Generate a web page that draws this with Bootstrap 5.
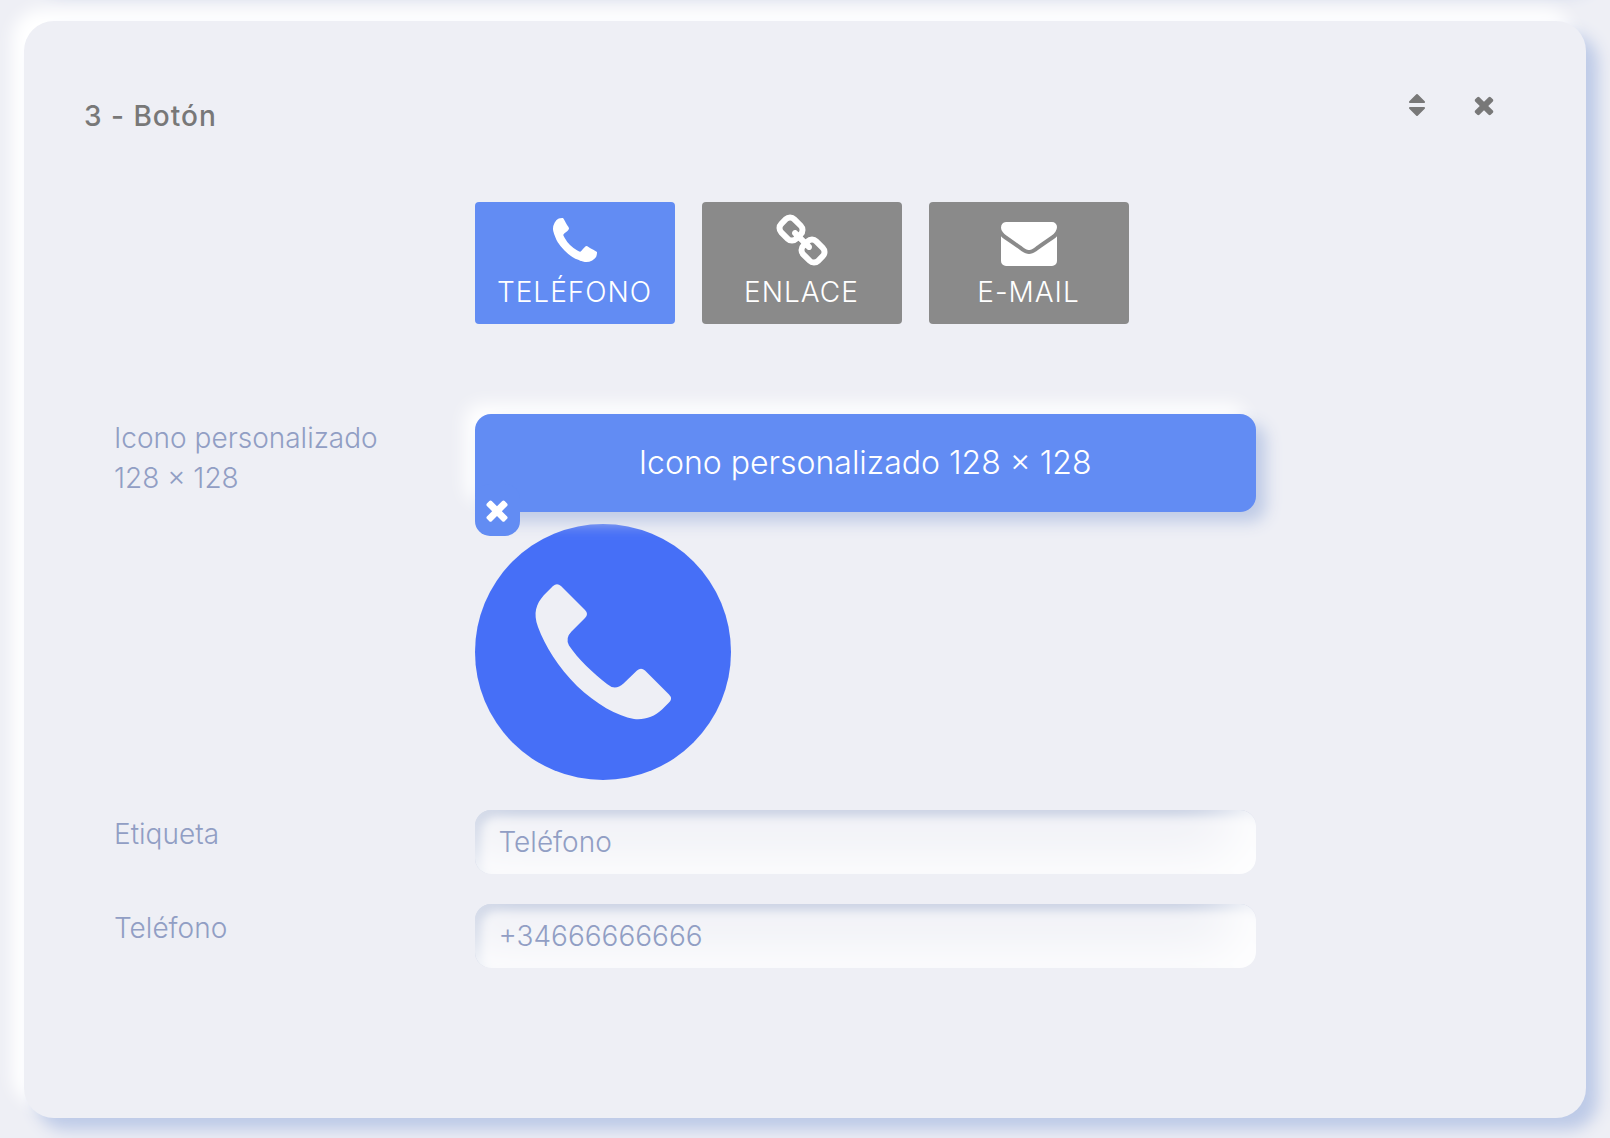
<!DOCTYPE html>
<html lang="es">
<head>
<meta charset="utf-8">
<meta name="viewport" content="width=device-width, initial-scale=1">
<title>Botón</title>
<link href="https://cdn.jsdelivr.net/npm/bootstrap@5.3.0/dist/css/bootstrap.min.css" rel="stylesheet">
<style>
  body { background: #eeeff5; color: #919ec4; font-family: Inter, "Liberation Sans", sans-serif; font-size: 28px; font-weight: 300; line-height: 40px; overflow-x: hidden; }
  .stack { display: flex; flex-direction: column; gap: 40px; margin-top: -119px; padding: 0 24px 20px; }
  .panel { background: #eeeff5; border-radius: 30px; box-shadow: 12px 12px 16px #bdcae7, -12px -12px 16px #fff; padding: 60px; }
  .panel-prev { height: 100px; padding: 0; }
  .panel-title { color: #787878; font-size: 28px; font-weight: 500; letter-spacing: 1px; line-height: 40px; margin: 15px 0 0; }
  .tools { gap: 39px; padding: 10px 28px 0 0; }
  .tool-btn { background: none; border: 0; color: #787878; padding: 0; line-height: 0; }
  .ico { fill: currentColor; display: block; width: 28px; height: 28px; }
  .form-line { --bs-gutter-x: 60px; }
  .kinds { gap: 27px; margin-top: 66px; margin-bottom: 90px; }
  .kind { width: 200px; height: 122px; border: 0; border-radius: 4px; background: #8a8a8a; color: #fff; padding: 0; text-transform: uppercase; font-weight: 300; letter-spacing: 1px; line-height: 40px; }
  .kind.active { background: #628cf3; }
  .kind .ico { width: 56px; height: 56px; margin: 0 auto 2px; }
  .field-label { padding-top: 4px; }
  .upload { position: relative; display: block; width: 100%; height: 98px; border: 0; border-radius: 16px; background: #628cf3; color: #fff; font-size: 32px; font-weight: 300; box-shadow: 10px 10px 16px #bfcbe6, -10px -10px 18px #fff; }
  .holder { position: relative; }
  .clear-btn { position: absolute; left: 0; top: 70px; width: 45px; height: 52px; border: 0; border-radius: 15px; background: #628cf3; color: #fff; padding: 0; }
  .clear-btn .ico { width: 32px; height: 32px; margin: 0 auto; }
  .preview { display: block; width: 256px; height: 256px; margin-top: 12px; }
  .text-field { display: block; width: 100%; height: 64px; border: 0; border-radius: 16px; background: #eeeff5; color: #919ec4; font-weight: 300; padding: 0 24px; box-shadow: inset -20px -20px 60px #fff, inset 6px 6px 10px #b4bfd8; outline: 0; }
  .fields-gap { margin-top: 30px; }
  .panel-end { padding-bottom: 150px; }
</style>
<script src="https://cdn.jsdelivr.net/npm/bootstrap@5.3.0/dist/js/bootstrap.bundle.min.js"></script>
</head>
<body>
<main class="stack">
  <div class="panel panel-prev"></div>
  <section class="panel panel-end">
    <header class="d-flex justify-content-between align-items-start">
      <h2 class="panel-title">3 - Botón</h2>
      <div class="tools d-flex">
        <button type="button" class="tool-btn" aria-label="Mover"><svg class="ico" viewBox="0 0 1792 1792"><path d="M1408 1088q0 26-19 45l-448 448q-19 19-45 19t-45-19l-448-448q-19-19-19-45t19-45 45-19h896q26 0 45 19t19 45zm0-384q0 26-19 45t-45 19h-896q-26 0-45-19t-19-45 19-45l448-448q19-19 45-19t45 19l448 448q19 19 19 45z"/></svg></button>
        <button type="button" class="tool-btn" aria-label="Eliminar"><svg class="ico" viewBox="0 0 1792 1792"><path d="M1490 1322q0 40-28 68l-136 136q-28 28-68 28t-68-28l-294-294-294 294q-28 28-68 28t-68-28l-136-136q-28-28-28-68t28-68l294-294-294-294q-28-28-28-68t28-68l136-136q28-28 68-28t68 28l294 294 294-294q28-28 68-28t68 28l136 136q28 28 28 68t-28 68l-294 294 294 294q28 28 28 68z"/></svg></button>
      </div>
    </header>
    <div class="row form-line mx-0">
      <div class="col-9 offset-3">
        <div class="kinds d-flex">
          <button type="button" class="kind active"><svg class="ico" viewBox="0 0 1792 1792"><path d="M1600 1240q0 27-10 70.500t-21 68.500q-21 50-122 106-94 51-186 51-27 0-53-3.500t-57.500-12.500-47-14.500-55.500-20.500-49-18q-98-35-175-83-127-79-264-216t-216-264q-48-77-83-175-3-9-18-49t-20.500-55.500-14.500-47-12.500-57.500-3.500-53q0-92 51-186 56-101 106-122 25-11 68.500-21t70.500-10q14 0 21 3 18 6 53 76 11 19 30 54t35 63.500 31 53.500q3 4 17.500 25t21.500 35.500 7 28.500q0 20-28.500 50t-62 55-62 53-28.500 46q0 9 5 22.500t8.500 20.500 14 24 11.500 19q76 137 174 235t235 174q2 1 19 11.500t24 14 20.500 8.500 22.500 5q18 0 46-28.500t53-62 55-62 50-28.500q14 0 28.500 7t35.500 21.500 25 17.500q25 15 53.500 31t63.500 35 54 30q70 35 76 53 3 7 3 21z"/></svg>Teléfono</button>
          <button type="button" class="kind"><svg class="ico" viewBox="0 0 1792 1792"><path d="M1520 1216q0-40-28-68l-208-208q-28-28-68-28-42 0-72 32 3 3 19 18.500t21.500 21.500 15 19 13 25.500 3.500 27.500q0 40-28 68t-68 28q-15 0-27.500-3.500t-25.500-13-19-15-21.500-21.500-18.500-19q-33 31-33 73 0 40 28 68l206 207q27 27 68 27 40 0 68-26l147-146q28-28 28-67zm-703-705q0-40-28-68l-206-207q-28-28-68-28-39 0-68 27l-147 146q-28 28-28 67 0 40 28 68l208 208q27 27 68 27 42 0 72-31-3-3-19-18.500t-21.500-21.500-15-19-13-25.500-3.500-27.500q0-40 28-68t68-28q15 0 27.500 3.500t25.500 13 19 15 21.500 21.500 18.500 19q33-31 33-73zm895 705q0 120-85 203l-147 146q-83 83-203 83-121 0-204-85l-206-207q-83-83-83-203 0-123 88-209l-88-88q-86 88-208 88-120 0-204-84l-208-208q-84-84-84-204t85-203l147-146q83-83 203-83 121 0 204 85l206 207q83 83 83 203 0 123-88 209l88 88q86-88 208-88 120 0 204 84l208 208q84 84 84 204z"/></svg>Enlace</button>
          <button type="button" class="kind"><svg class="ico" viewBox="0 0 1792 1792"><path d="M1792 710v794q0 66-47 113t-113 47h-1472q-66 0-113-47t-47-113v-794q44 49 101 87 362 246 497 345 57 42 92.500 65.500t94.500 48 110 24.500h2q51 0 110-24.500t94.500-48 92.500-65.500q170-123 498-345 57-39 100-87zm0-294q0 79-49 151t-122 123q-376 261-468 325-10 7-42.500 31t-54 38.500-52 32.500-57.500 27-50 9h-2q-23 0-50-9t-57.500-27-52-32.500-54-38.500-42.500-31q-91-64-262-182.500t-205-142.500q-62-42-117-115.500t-55-136.500q0-78 41.500-130t118.500-52h1472q65 0 112.500 47t47.500 113z"/></svg>E-mail</button>
        </div>
      </div>
    </div>
    <form>
      <div class="row form-line mx-0">
        <label class="col-3 field-label" for="iconFile">Icono personalizado<br>128 × 128</label>
        <div class="col-7">
          <div class="holder">
            <button type="button" class="upload" id="iconFile">Icono personalizado 128 × 128</button>
            <button type="button" class="clear-btn" aria-label="Quitar icono"><svg class="ico" viewBox="0 0 1792 1792"><path d="M1490 1322q0 40-28 68l-136 136q-28 28-68 28t-68-28l-294-294-294 294q-28 28-68 28t-68-28l-136-136q-28-28-28-68t28-68l294-294-294-294q-28-28-28-68t28-68l136-136q28-28 68-28t68 28l294 294 294-294q28-28 68-28t68 28l136 136q28 28 28 68t-28 68l-294 294 294 294q28 28 28 68z"/></svg></button>
          </div>
          <svg class="preview" viewBox="0 0 256 256"><circle cx="128" cy="128" r="128" fill="#466ff7"/><path fill="#eeeff5" d="M78 62Q82 58.500 86 62L110 86Q114 90 110 94L96.500 107.500Q90 114 94 121.500C103 135 118 149 132 160Q140 167 148.500 159.500L162 146.500Q166 143 170 146.500L194 170.500Q198 174.500 194 178.500L187 185.500C179 193 170 196 159 195C142 192 121 180 102 162C83 143 70 122 63 103C58 89 61 80 69 71Z"/></svg>
        </div>
      </div>
      <div class="row form-line mx-0 fields-gap">
        <label class="col-3 field-label" for="labelText">Etiqueta</label>
        <div class="col-7"><input class="text-field" id="labelText" type="text" value="Teléfono"></div>
      </div>
      <div class="row form-line mx-0 fields-gap">
        <label class="col-3 field-label" for="phoneText">Teléfono</label>
        <div class="col-7"><input class="text-field" id="phoneText" type="tel" value="+34666666666"></div>
      </div>
    </form>
  </section>
</main>
</body>
</html>
